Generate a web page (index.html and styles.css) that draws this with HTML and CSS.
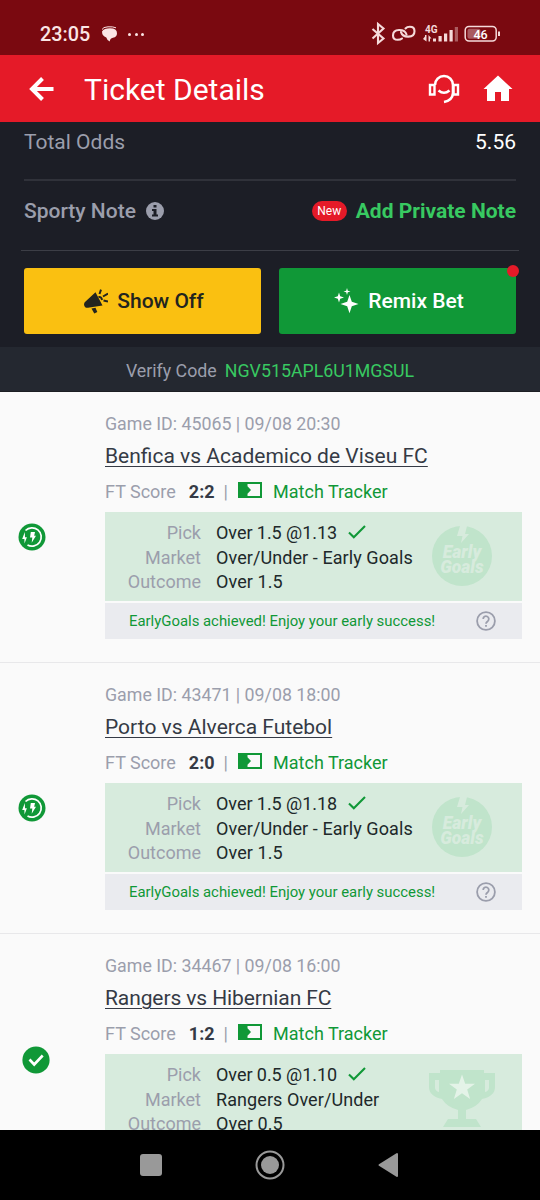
FILE: index.html
```html
<!DOCTYPE html>
<html lang="en">
<head>
<meta charset="utf-8">
<title>Ticket Details</title>
<link rel="stylesheet" href="styles.css">
</head>
<body>
<svg class="defs" width="0" height="0">
  <symbol id="tracker" viewBox="0 0 24 16"><path d="M1 1h22v14H1z" fill="none" stroke="currentColor" stroke-width="2"/><path d="M1 1h8.500v3.200l3.500 3.800-3.500 3.800v3.200H1z" fill="currentColor"/></symbol>
  <symbol id="tick" viewBox="0 0 18 14"><path d="M1 7.600l4.800 4.700L17 1" fill="none" stroke="currentColor" stroke-width="2.100"/></symbol>
  <symbol id="help" viewBox="0 0 20 20"><circle cx="10" cy="10" r="8.900" fill="none" stroke="currentColor" stroke-width="1.800"/><path d="M7.200 8a2.800 2.800 0 1 1 4.500 2.200c-1.100.8-1.700 1.300-1.700 2.600M10 14v1.700" fill="none" stroke="currentColor" stroke-width="1.800"/></symbol>
  <symbol id="early" viewBox="0 0 28 28"><circle cx="14" cy="14" r="13.500" fill="#109837"/><path d="M7.500 7.500A9.200 9.200 0 1 1 9.500 22" fill="none" stroke="#fff" stroke-width="1.700"/><path d="M6.800 9l-2.600 7h2.200l.1 4.500 2.400-6.200H7z" fill="#fff"/><path d="M12.800 9h4.200l-.8 3.700h1.800l-4.300 7 .6-5.200H12z" fill="#fff"/></symbol>
  <symbol id="bolt" viewBox="0 0 12 19"><path d="M3 0h7L8 8h4L4 17l1.500-7H0z" fill="#d7ebdd"/></symbol>
</svg>
<div class="phone">
  <div class="status">
    <span class="clock">23:05</span>
    <svg class="chat" width="17" height="16" viewBox="0 0 17 16"><path d="M1 3.500Q2 1 7 .8q5-.3 8 1" fill="none" stroke="#fbe5e5" stroke-width="1"/><path d="M1 5.500q2-3.300 8-3.300 7 0 7 5 0 3.700-4 4.600-3.200.7-3.200 3.800-3-1.500-3.500-4Q1 10 1 5.500z" fill="#fbe5e5"/></svg>
    <span class="dots"><i></i><i></i><i></i></span>
    <svg class="sys" width="132" height="26" viewBox="0 0 132 26" fill="none" stroke="#f5dada">
      <path d="M2.500 8l11 9.500-5.500 4.500V3l5.500 4.500-11 10" stroke-width="2.100"/>
      <g stroke-width="2.100" stroke-linecap="round"><path d="M32 17.500q-1.500 1.300-4.300 1.300-4.700 0-4.700-4.400 0-5.200 6-5.400 6-.2 7.500 4.500"/><path d="M35.500 7.500q1.500-1.700 4.300-1.700 4.700 0 4.700 4.400 0 5.200-6 5.400-6 .2-7.500-4.500"/></g>
      <g fill="#f5dada" stroke="none"><text x="55" y="11.500" font-family="Roboto, sans-serif" font-size="10" font-weight="700">4G</text><path d="M53 18l2-2.500V14h1.500v6.500zM58.500 14l3 3.500H60V20.500h-1.500zM63 17.500h3v3h-3zM68.500 15h3.200v5.500h-3.200zM74 12.500h3.200v8H74zM79.500 9h3.200v11.500h-3.200z"/><path d="M84.800 6H88v14.500h-3.200z" opacity=".4"/></g>
      <rect x="95.200" y="5.500" width="31" height="14.500" rx="3.800" stroke-width="1.500"/><rect x="97.500" y="7.700" width="13" height="10" rx="2" fill="#a95a60" stroke="none"/><path d="M129 10.500v4.500" stroke-width="2"/>
      <text x="103.500" y="17.500" font-family="Roboto, sans-serif" font-size="12.500" font-weight="500" fill="#fff" stroke="none">46</text>
    </svg>
  </div>
  <header class="header">
    <svg class="back" width="26" height="26" viewBox="0 0 26 26"><path d="M25.500 13H4M14.500 2.500L4 13l10.500 10.500" fill="none" stroke="#fff" stroke-width="4"/></svg>
    <h1>Ticket Details</h1>
    <svg class="support" width="32" height="30" viewBox="0 0 32 30" fill="none" stroke="#fff" stroke-width="2.600"><path d="M2 11h4.500v9.500H2zM25.500 11H30v9.500h-4.500z" stroke-width="2.400"/><path d="M7 11a9 9 0 0 1 18 0v8q-.5 7.500-9 9M10.500 16.500q5.500 4.500 11 0"/></svg>
    <svg class="home" width="30" height="27" viewBox="0 0 30 27"><path d="M15 .5L29.500 14H26v12h-8v-9h-6v9H4V14H.5z" fill="#fff"/></svg>
  </header>
  <main>
    <section class="summary">
      <div class="row odds"><span>Total Odds</span><b>5.56</b></div>
      <div class="row note"><span class="nlabel">Sporty Note</span><svg width="18" height="18" viewBox="0 0 18 18"><circle cx="9" cy="9" r="9" fill="#9b9eac"/><path d="M7.500 3h3v2.600h-3zM6 7h4.500v5.500H12V14.500H6v-2h1.500V9H6z" fill="#1c1e26"/></svg><span class="new">New</span><a class="add">Add Private Note</a></div>
      <div class="actions">
        <div class="btn show"><svg width="24" height="25" viewBox="0 0 24 25"><path d="M0 15.500q0-2 1.500-3L11.500 3.200l7 13.300L4 18.800q-3.500.5-4-3.300z" fill="#22241f"/><path d="M7.500 19.500l4-.7 1.800 4.200-3 1.500z" fill="#22241f"/><path d="M15.500 5L17 .7M19 7.500l5-3M19.500 11.500l4.500 1M14.500 8q3-.5 3.500 3" fill="none" stroke="#22241f" stroke-width="2"/></svg><span>Show Off</span></div>
        <div class="btn remix"><svg width="25" height="26" viewBox="0 0 25 26" fill="#fff"><path d="M15.500 7l2.300 6.700 6.700 2.300-6.700 2.300-2.300 7-2.300-7L6.500 16l6.700-2.300zM5 4.500l1.200 3.800L10 9.500l-3.800 1.200L5 14.500l-1.200-3.800L0 9.500l3.800-1.200zM13 0l.8 2.700 2.700.8-2.700.8L13 7l-.8-2.700-2.700-.8 2.700-.8z"/></svg><span>Remix Bet</span></div>
      </div>
    </section>
    <div class="verify"><span>Verify Code</span><span class="code">NGV515APL6U1MGSUL</span></div>

    <article class="match">
      <div class="state"><svg width="28" height="28"><use href="#early"/></svg></div>
      <div class="info">
        <p class="game">Game ID: 45065 | 09/08 20:30</p>
        <h2><span>Benfica vs Academico de Viseu FC</span></h2>
        <div class="score"><span>FT Score</span><b>2:2</b><em>|</em><svg width="24" height="16"><use href="#tracker"/></svg><a>Match Tracker</a></div>
        <div class="pick"><dl><dt>Pick</dt><dd class="choice">Over 1.5 @1.13 <svg width="18" height="14"><use href="#tick"/></svg></dd><dt>Market</dt><dd>Over/Under - Early Goals</dd><dt>Outcome</dt><dd>Over 1.5</dd></dl><div class="badge"><svg width="12" height="19"><use href="#bolt"/></svg><span>Early</span><span>Goals</span></div></div>
        <div class="early"><span>EarlyGoals achieved! Enjoy your early success!</span><svg width="20" height="20"><use href="#help"/></svg></div>
      </div>
    </article>
    <article class="match">
      <div class="state"><svg width="28" height="28"><use href="#early"/></svg></div>
      <div class="info">
        <p class="game">Game ID: 43471 | 09/08 18:00</p>
        <h2><span>Porto vs Alverca Futebol</span></h2>
        <div class="score"><span>FT Score</span><b>2:0</b><em>|</em><svg width="24" height="16"><use href="#tracker"/></svg><a>Match Tracker</a></div>
        <div class="pick"><dl><dt>Pick</dt><dd class="choice">Over 1.5 @1.18 <svg width="18" height="14"><use href="#tick"/></svg></dd><dt>Market</dt><dd>Over/Under - Early Goals</dd><dt>Outcome</dt><dd>Over 1.5</dd></dl><div class="badge"><svg width="12" height="19"><use href="#bolt"/></svg><span>Early</span><span>Goals</span></div></div>
        <div class="early"><span>EarlyGoals achieved! Enjoy your early success!</span><svg width="20" height="20"><use href="#help"/></svg></div>
      </div>
    </article>
    <article class="match last">
      <div class="state won"><svg width="28" height="28" viewBox="0 0 28 28"><circle cx="14" cy="14" r="13.600" fill="#109837"/><path d="M7.500 13.500l4.700 5 8.500-9" fill="none" stroke="#fff" stroke-width="2.600"/></svg></div>
      <div class="info">
        <p class="game">Game ID: 34467 | 09/08 16:00</p>
        <h2><span class="tight">Rangers vs Hibernian FC</span></h2>
        <div class="score"><span>FT Score</span><b>1:2</b><em>|</em><svg width="24" height="16"><use href="#tracker"/></svg><a>Match Tracker</a></div>
        <div class="pick"><dl><dt>Pick</dt><dd class="choice">Over 0.5 @1.10 <svg width="18" height="14"><use href="#tick"/></svg></dd><dt>Market</dt><dd>Rangers Over/Under</dd><dt>Outcome</dt><dd>Over 0.5</dd></dl><svg class="cup" width="66" height="57" viewBox="0 0 66 57"><g fill="#c0e4cb"><path d="M11 0h44v3h11v14q0 9-13 12-5 8-16 11v9h10l5 8H14l5-8h10v-9q-11-3-16-11Q0 26 0 17V3h11z"/><path d="M6 10v8q.500 3 4 4V10zM60 10v8q-.5 3-4 4V10z" fill="#d7ebdd"/></g><path d="M33 4.500l3.200 9.200h9.800l-7.800 5.900 2.900 9.400-8.100-5.700-8.100 5.700 2.900-9.400-7.800-5.900h9.800z" fill="#e4f3e8"/></svg></div>
      </div>
    </article>
  </main>
  <nav class="nav">
    <svg width="22" height="22" viewBox="0 0 22 22"><rect width="22" height="22" rx="3" fill="#999"/></svg>
    <svg width="30" height="30" viewBox="0 0 30 30"><circle cx="15" cy="15" r="13.500" fill="none" stroke="#999" stroke-width="2"/><circle cx="15" cy="15" r="9" fill="#999"/></svg>
    <svg width="22" height="26" viewBox="0 0 22 26"><path d="M19 2v22L1.500 13z" fill="#999" stroke="#999" stroke-width="2" stroke-linejoin="round"/></svg>
  </nav>
</div>
</body>
</html>
```
FILE: styles.css
```css
* { box-sizing: border-box; }
body { margin: 0; font-family: Roboto, sans-serif; }
svg { display: block; flex: none; }
h1, h2, p, dl, dd { margin: 0; font-weight: 400; }
.defs { position: absolute; }
.phone { width: 540px; height: 1200px; display: flex; flex-direction: column; overflow: hidden; background: #fafafa; }

.status { flex: none; height: 55px; background: #7a0910; display: flex; align-items: center; padding: 13px 38px 0 40px; color: #fbe5e5; }
.clock { font-size: 19.8px; font-weight: 500; width: 61px; }
.dots { display: flex; gap: 3.700px; margin-left: 10px; }
.dots i { width: 3px; height: 3px; border-radius: 50%; background: #fbe5e5; }
.sys { margin-left: auto; }

.header { flex: none; height: 66.500px; background: #e51a28; display: flex; align-items: center; padding: 1px 27px 0 28px; color: #fff; }
.header h1 { font-size: 30px; margin-left: 30px; line-height: 40px; padding-top: 2px; }
.support { margin-left: auto; }
.home { margin-left: 23px; }

main { flex: 1; min-height: 0; overflow: hidden; }
.summary { height: 225.500px; background: #1c1e26; padding: 0 24px; color: #9b9eac; font-size: 21px; }
.row { display: flex; align-items: center; }
.odds { height: 59.500px; padding-bottom: 16px; border-bottom: 2px solid #30323a; }
.odds b { margin-left: auto; font-weight: 400; color: #fff; }
.note { height: 70px; margin: 0 -3px; padding: 0 3px 9px; border-bottom: 1px solid #3c3e46; }
.nlabel { font-weight: 500; margin-right: 10px; }
.new { margin-left: auto; width: 35px; height: 20px; border-radius: 10px; background: #e51a28; color: #fff; font-size: 12px; line-height: 20px; text-align: center; }
.add { margin-left: 9px; color: #38c961; font-weight: 700; }
.actions { display: flex; gap: 18px; margin-top: 17px; }
.btn { position: relative; flex: 1; height: 66px; border-radius: 3px; display: flex; align-items: center; justify-content: center; gap: 9px; padding-left: 3px; font-weight: 500; }
.show { background: #fac011; color: #22241f; }
.remix { background: #109837; color: #fff; }
.remix::after { content: ""; position: absolute; right: -3px; top: -3px; width: 12px; height: 12px; border-radius: 50%; background: #e51a28; }
.verify { height: 45px; background: #242830; border-bottom: 1px solid #1c1e23; color: #9b9eac; font-size: 17.8px; display: flex; align-items: center; justify-content: center; gap: 8px; padding-top: 3px; }
.code { color: #38c961; }

.match { height: 271px; border-bottom: 1px solid #e8e8ea; display: flex; padding: 20px 18px 0; }
.state { width: 87px; padding-top: 111px; }
.state svg { margin-left: -.5px; }
.won { padding: 92px 0 0 4px; }
.info { flex: 1; }
.game { color: #9b9eac; font-size: 17.8px; line-height: 24px; }
h2 { font-size: 21px; line-height: 30px; margin-top: 5px; height: 30px; color: #353a45; }
h2 span { text-decoration: underline; text-decoration-thickness: 1px; text-underline-offset: 3px; }
h2 .tight { letter-spacing: -.1px; }
.score { height: 24px; margin-top: 8px; display: flex; align-items: center; font-size: 18px; color: #9b9eac; }
.score b { color: #353a45; font-weight: 700; margin-left: 13px; }
.score em { font-style: normal; margin-left: 9px; width: 14px; }
.score svg { color: #109837; margin-top: -3px; }
.score a { color: #109837; margin-left: 11.500px; }
.pick { margin-top: 9px; height: 89px; background: #d7ebdd; display: flex; padding-top: 8px; font-size: 18px; }
dl { display: grid; grid-template-columns: 96px 1fr; grid-auto-rows: 24.7px; column-gap: 15px; line-height: 25px; width: 327px; }
dt { text-align: right; color: #9b9eac; }
dd { color: #20282a; display: flex; align-items: center; white-space: nowrap; letter-spacing: .08px; }
.choice { letter-spacing: -.05px; }
dd svg { color: #109837; margin-left: 11px; }
.badge { width: 60px; height: 60px; margin-top: 6px; border-radius: 50%; background: #c0e4cb; color: #d7ebdd; font-size: 17.500px; font-weight: 900; font-style: italic; line-height: 15px; text-align: center; }
.badge svg { margin: 0 0 0 25px; }
.badge span { display: block; }
.cup { margin: 8px 0 0 -3.500px; }
.early { margin-top: 1.500px; height: 36.500px; background: #eaebef; display: flex; align-items: center; padding: 1px 26px 0 24px; justify-content: space-between; font-size: 14.9px; color: #109837; }
.early svg { color: #9b9eac; }

.nav { flex: none; height: 70px; background: #000; display: grid; grid-template-columns: 22px 30px 22px; justify-content: center; column-gap: 93px; align-items: center; }
```
